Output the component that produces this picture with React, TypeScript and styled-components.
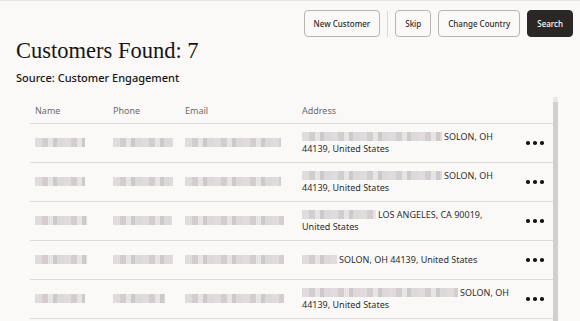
import * as React from 'react';
import styled, { createGlobalStyle } from 'styled-components';

const GlobalStyle = createGlobalStyle`
  html, body {
    margin: 0;
    background-color: #faf9f8;
    color: #312d2a;
    font-family: 'Noto Sans', 'Open Sans', sans-serif;
  }
`;

const Page = styled.div`
  width: 580px;
  height: 321px;
  overflow: hidden;
  border-top: 1px solid #e6e4e1;
  box-sizing: border-box;
`;

const Toolbar = styled.div`
  display: flex;
  justify-content: flex-end;
  align-items: center;
  gap: 7px;
  padding: 9px 7px 0 0;
`;

const Button = styled.button<{ $primary?: boolean }>`
  height: 27px;
  padding: 0 9px;
  border-radius: 4px;
  border: 1px solid ${(p) => (p.$primary ? '#2b2724' : '#b9b5b1')};
  background-color: ${(p) => (p.$primary ? '#2b2724' : '#faf9f8')};
  color: ${(p) => (p.$primary ? '#ffffff' : '#312d2a')};
  font-family: 'Noto Sans', sans-serif;
  font-size: 8px;
  font-weight: 500;
  cursor: pointer;
`;

const Divider = styled.div`
  width: 1px;
  height: 26px;
  background-color: #dedbd7;
`;

const Title = styled.h1`
  margin: 0 0 0 16px;
  font-family: 'Liberation Serif', 'Times New Roman', serif;
  font-weight: 400;
  font-size: 22.5px;
  line-height: 28px;
  color: #161513;
`;

const Source = styled.div`
  margin: 5px 0 0 16px;
  font-size: 11px;
  line-height: 15px;
  font-weight: 500;
  color: #161513;
`;

const TableArea = styled.div`
  display: flex;
  margin: 12px 0 0 30px;
  width: 528px;
`;

const Table = styled.div`
  flex: 1;
`;

const Row = styled.div<{ $head?: boolean }>`
  display: grid;
  grid-template-columns: 78px 72px 117px 220px 36px;
  align-items: center;
  height: ${(p) => (p.$head ? '26px' : '38px')};
  border-bottom: 1px solid #dcd9d5;
`;

const HeadCell = styled.div`
  padding: 0 5px;
  font-size: 9px;
  color: #6f6a66;
`;

const Cell = styled.div`
  padding: 0 5px;
  font-size: 9px;
  line-height: 12px;
  color: #312d2a;
`;

const Actions = styled.div`
  display: flex;
  justify-content: center;
  gap: 3.5px;
`;

const Dot = styled.span`
  width: 3.6px;
  height: 3.6px;
  border-radius: 50%;
  background-color: #161513;
`;

const Blur = styled.span<{ $w: number }>`
  display: inline-block;
  width: ${(p) => p.$w}px;
  height: 9px;
  margin-right: 2px;
  vertical-align: -1px;
  background: repeating-linear-gradient(
    90deg,
    #e0dcdd 0 7px,
    #d3cdd0 7px 13px,
    #e7e4e4 13px 18px,
    #cdc8ca 18px 22px,
    #ddd9da 22px 29px
  );
  filter: blur(0.7px);
`;

const ScrollTrack = styled.div`
  width: 5px;
  display: flex;
  flex-direction: column;
`;

const ScrollCap = styled.div`
  height: 5px;
  background-color: #ebe9e7;
`;

const ScrollThumb = styled.div`
  flex: 1;
  min-height: 230px;
  background-color: #d2d0ce;
`;

type Customer = {
  name: number;
  phone: number;
  email: number;
  addrBlur: number;
  addr: string;
};

const customers: Customer[] = [
  { name: 50, phone: 60, email: 96, addrBlur: 140, addr: 'SOLON, OH 44139, United States' },
  { name: 50, phone: 60, email: 96, addrBlur: 140, addr: 'SOLON, OH 44139, United States' },
  { name: 52, phone: 59, email: 99, addrBlur: 74, addr: 'LOS ANGELES, CA 90019, United States' },
  { name: 52, phone: 60, email: 99, addrBlur: 35, addr: 'SOLON, OH 44139, United States' },
  { name: 50, phone: 52, email: 99, addrBlur: 156, addr: 'SOLON, OH 44139, United States' },
];

const App: React.FC = () => {
  return (
    <>
      <GlobalStyle />
      <Page>
        <Toolbar>
          <Button>New Customer</Button>
          <Divider />
          <Button>Skip</Button>
          <Button>Change Country</Button>
          <Button $primary>Search</Button>
        </Toolbar>
        <Title>Customers Found: 7</Title>
        <Source>Source: Customer Engagement</Source>
        <TableArea>
          <Table>
            <Row $head>
              <HeadCell>Name</HeadCell>
              <HeadCell>Phone</HeadCell>
              <HeadCell>Email</HeadCell>
              <HeadCell>Address</HeadCell>
              <HeadCell />
            </Row>
            {customers.map((c, i) => (
              <Row key={i}>
                <Cell><Blur $w={c.name} /></Cell>
                <Cell><Blur $w={c.phone} /></Cell>
                <Cell><Blur $w={c.email} /></Cell>
                <Cell>
                  <Blur $w={c.addrBlur} />
                  {c.addr}
                </Cell>
                <Actions>
                  <Dot />
                  <Dot />
                  <Dot />
                </Actions>
              </Row>
            ))}
          </Table>
          <ScrollTrack>
            <ScrollCap />
            <ScrollThumb />
          </ScrollTrack>
        </TableArea>
      </Page>
    </>
  );
};

export default App;
